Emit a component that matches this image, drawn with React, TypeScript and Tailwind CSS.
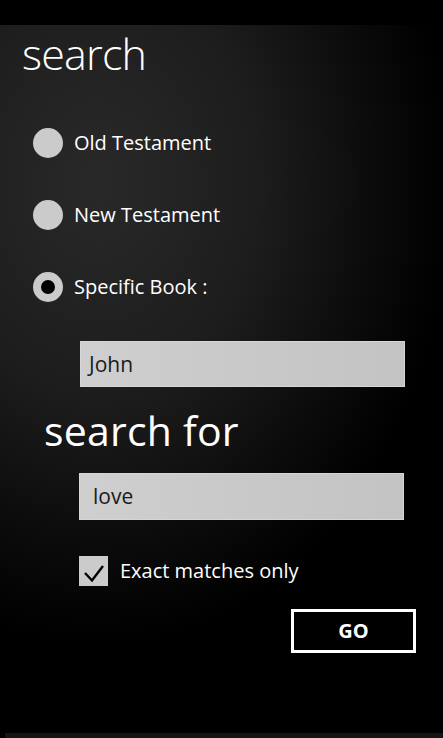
import React from "react";

function Radio({ checked, label }: { checked?: boolean; label: string }) {
  return (
    <div className="h-[72px] flex items-center pl-[33px]">
      <div className="w-[30px] h-[30px] rounded-full bg-[#cbcbcb] flex items-center justify-center shrink-0">
        {checked && <div className="w-[14px] h-[14px] rounded-full bg-black" />}
      </div>
      <span className="ml-[11px] text-[20px] leading-none text-white">{label}</span>
    </div>
  );
}

export default function App() {
  return (
    <div
      className="w-[443px] h-[738px] flex flex-col bg-black overflow-hidden"
      style={{ fontFamily: '"Open Sans", "Noto Sans", sans-serif' }}
    >
      <div className="h-[25px] bg-black shrink-0" />
      <div className="flex-1 flex flex-col bg-[radial-gradient(ellipse_80%_65%_at_22%_22%,#292929_0%,#1d1d1d_45%,#0a0a0a_80%,#000_100%)]">
        <h1 className="pl-[22px] pt-[7px] h-[82px] text-[43px] font-light leading-none text-white tracking-[-0.8px]">
          search
        </h1>
        <Radio label="Old Testament" />
        <Radio label="New Testament" />
        <Radio checked label="Specific Book :" />
        <div className="mt-[18px] ml-[80px] w-[325px] h-[46px] bg-gradient-to-r from-[#cfcfcf] to-[#c3c3c3] border border-[#d6d6d6] flex items-center pl-[8px]">
          <span className="text-[21px] text-[#1a1a1a] leading-none">John</span>
        </div>
        <div className="pl-[44px] h-[86px] flex items-center">
          <span className="text-[41px] leading-none text-white tracking-[0.2px]">search for</span>
        </div>
        <div className="ml-[79px] w-[325px] h-[47px] bg-gradient-to-r from-[#cfcfcf] to-[#c3c3c3] border border-[#d6d6d6] flex items-center pl-[13px]">
          <span className="text-[21px] text-[#1a1a1a] leading-none">love</span>
        </div>
        <div className="mt-[36px] ml-[79px] flex items-center">
          <div className="w-[29px] h-[30px] bg-[#cbcbcb] flex items-center justify-center">
            <svg width="29" height="30" viewBox="0 0 29 30">
              <path d="M6 17 L13 24.5 L24 10" fill="none" stroke="#000" strokeWidth="2.4" />
            </svg>
          </div>
          <span className="ml-[12px] text-[20px] leading-none text-white">Exact matches only</span>
        </div>
        <div className="mt-[23px] ml-[291px] w-[125px] h-[44px] border-[3px] border-white flex items-center justify-center">
          <span className="text-[20px] font-bold text-white leading-none">GO</span>
        </div>
        <div className="flex-1" />
        <div className="h-[5px] ml-[5px] bg-[#151515]" />
      </div>
    </div>
  );
}
